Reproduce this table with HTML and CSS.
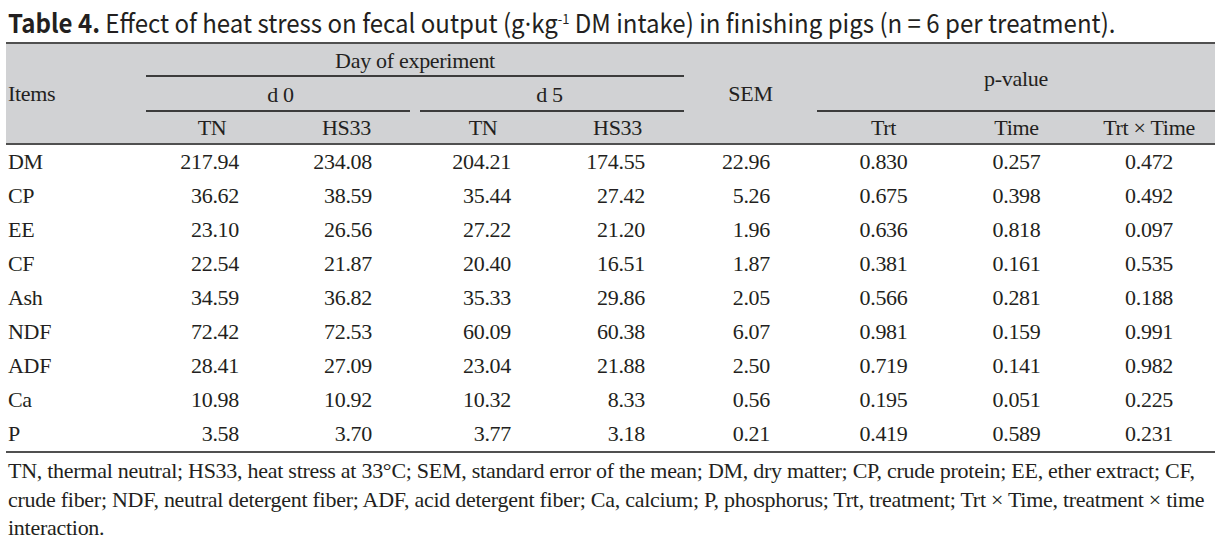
FILE: index.html
```html
<!DOCTYPE html>
<html>
<head>
<meta charset="utf-8">
<link rel="stylesheet" href="styles.css">
</head>
<body>
<div class="page">
  <h1 class="title"><span class="title-text"><b>Table 4.</b> Effect of heat stress on fecal output (g<span class="dot">·</span>kg<sup>-1</sup> DM intake) in finishing pigs (n = 6 per treatment).</span></h1>
  <table class="data">
    <colgroup>
      <col class="c-items"><col class="c1"><col class="c2"><col class="c3"><col class="c4"><col class="c5"><col class="c6"><col class="c7"><col class="c8">
    </colgroup>
    <thead>
      <tr class="h1">
        <th class="items" rowspan="3">Items</th>
        <th colspan="4" class="rule-full">Day of experiment</th>
        <th rowspan="3" class="sem">SEM</th>
        <th colspan="3" rowspan="2" class="pval">p-value</th>
      </tr>
      <tr class="h2">
        <th colspan="2" class="rule-left">d 0</th>
        <th colspan="2" class="rule-right">d 5</th>
      </tr>
      <tr class="h3">
        <th>TN</th><th>HS33</th><th>TN</th><th>HS33</th>
        <th>Trt</th><th>Time</th><th>Trt × Time</th>
      </tr>
    </thead>
    <tbody>
      <tr><td class="item">DM</td><td class="n1">217.94</td><td class="n2">234.08</td><td class="n3">204.21</td><td class="n4">174.55</td><td class="n5">22.96</td><td class="p">0.830</td><td class="p">0.257</td><td class="p">0.472</td></tr>
      <tr><td class="item">CP</td><td class="n1">36.62</td><td class="n2">38.59</td><td class="n3">35.44</td><td class="n4">27.42</td><td class="n5">5.26</td><td class="p">0.675</td><td class="p">0.398</td><td class="p">0.492</td></tr>
      <tr><td class="item">EE</td><td class="n1">23.10</td><td class="n2">26.56</td><td class="n3">27.22</td><td class="n4">21.20</td><td class="n5">1.96</td><td class="p">0.636</td><td class="p">0.818</td><td class="p">0.097</td></tr>
      <tr><td class="item">CF</td><td class="n1">22.54</td><td class="n2">21.87</td><td class="n3">20.40</td><td class="n4">16.51</td><td class="n5">1.87</td><td class="p">0.381</td><td class="p">0.161</td><td class="p">0.535</td></tr>
      <tr><td class="item">Ash</td><td class="n1">34.59</td><td class="n2">36.82</td><td class="n3">35.33</td><td class="n4">29.86</td><td class="n5">2.05</td><td class="p">0.566</td><td class="p">0.281</td><td class="p">0.188</td></tr>
      <tr><td class="item">NDF</td><td class="n1">72.42</td><td class="n2">72.53</td><td class="n3">60.09</td><td class="n4">60.38</td><td class="n5">6.07</td><td class="p">0.981</td><td class="p">0.159</td><td class="p">0.991</td></tr>
      <tr><td class="item">ADF</td><td class="n1">28.41</td><td class="n2">27.09</td><td class="n3">23.04</td><td class="n4">21.88</td><td class="n5">2.50</td><td class="p">0.719</td><td class="p">0.141</td><td class="p">0.982</td></tr>
      <tr><td class="item">Ca</td><td class="n1">10.98</td><td class="n2">10.92</td><td class="n3">10.32</td><td class="n4">8.33</td><td class="n5">0.56</td><td class="p">0.195</td><td class="p">0.051</td><td class="p">0.225</td></tr>
      <tr><td class="item">P</td><td class="n1">3.58</td><td class="n2">3.70</td><td class="n3">3.77</td><td class="n4">3.18</td><td class="n5">0.21</td><td class="p">0.419</td><td class="p">0.589</td><td class="p">0.231</td></tr>
    </tbody>
  </table>
  <p class="note">TN, thermal neutral; HS33, heat stress at 33°C; SEM, standard error of the mean; DM, dry matter; CP, crude protein; EE, ether extract; CF, crude fiber; NDF, neutral detergent fiber; ADF, acid detergent fiber; Ca, calcium; P, phosphorus; Trt, treatment; Trt × Time, treatment × time interaction.</p>
</div>
</body>
</html>
```

FILE: styles.css
```css
html, body {
  margin: 0;
  padding: 0;
  background: #ffffff;
}

.page {
  padding: 8px 0 0 6px;
  color: #231f20;
  font-family: "Liberation Serif", "Times New Roman", serif;
}

.title {
  margin: 0 0 6px 2px;
  height: 28px;
  font-family: "Noto Sans CJK KR", "Noto Sans", sans-serif;
  font-weight: 400;
  font-size: 26px;
  line-height: 28px;
  white-space: nowrap;
  color: #231f20;
}

.title-text {
  display: inline-block;
  transform: scaleX(0.925);
  transform-origin: left center;
}

.title b {
  font-weight: 700;
}

.title .dot {
  font-family: "Noto Sans", sans-serif;
}

.title sup {
  font-size: 14px;
  line-height: 0;
  vertical-align: 9px;
}

.data {
  width: 1209px;
  table-layout: fixed;
  border-collapse: separate;
  border-spacing: 0;
  border-top: 2px solid #505050;
  border-bottom: 2px solid #505050;
  font-size: 22px;
  letter-spacing: -0.3px;
}

.c-items { width: 140px; }
.c1 { width: 132px; }
.c2 { width: 137px; }
.c3 { width: 136px; }
.c4 { width: 133px; }
.c5 { width: 133px; }
.c6 { width: 133px; }
.c7 { width: 133px; }
.c8 { width: 132px; }

.data th {
  background-color: #d1d2d4;
  font-weight: 400;
  text-align: center;
  padding: 0;
  line-height: 24px;
  background-repeat: no-repeat;
}

.data th.items {
  text-align: left;
  padding-left: 2px;
}

.h1 th { height: 33px; }
.h2 th { height: 35px; }
.h3 th {
  height: 31px;
  border-bottom: 2px solid #505050;
}
.h1 th.items, .h1 th.sem {
  border-bottom: 2px solid #505050;
}

.rule-full,
.h1 th.pval {
  background-image: linear-gradient(#3c3c3c, #3c3c3c);
  background-size: 100% 2px;
  background-position: left bottom;
}
.rule-left {
  background-image: linear-gradient(#3c3c3c, #3c3c3c);
  background-size: calc(100% - 5px) 2px;
  background-position: left bottom;
}
.rule-right {
  background-image: linear-gradient(#3c3c3c, #3c3c3c);
  background-size: calc(100% - 5px) 2px;
  background-position: right bottom;
}

.h1 th.pval {
  padding-top: 2px;
}

.data td {
  height: 34px;
  padding: 0;
  line-height: 24px;
  text-align: right;
}

.data td.item {
  text-align: left;
  padding-left: 2px;
}

.data td.n1 { padding-right: 39px; }
.data td.n2 { padding-right: 43px; }
.data td.n3 { padding-right: 40px; }
.data td.n4 { padding-right: 39px; }
.data td.n5 { padding-right: 47px; }
.data td.p { text-align: center; }

.note {
  margin: 4px 0 0 2px;
  width: 1212px;
  font-size: 22px;
  line-height: 28.5px;
  letter-spacing: -0.27px;
}
```
